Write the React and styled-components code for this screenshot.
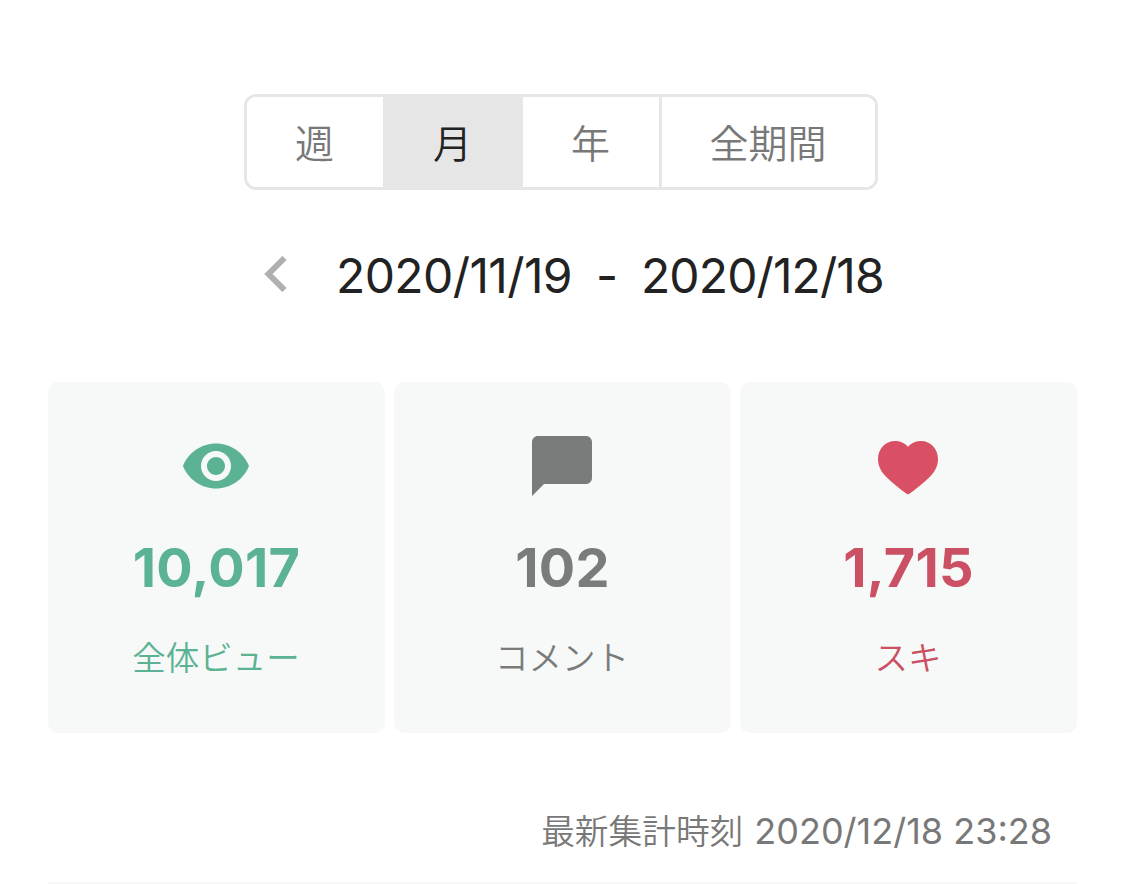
import { useState } from 'react';
import styled, { createGlobalStyle } from 'styled-components';

const GlobalStyle = createGlobalStyle`
    * {
        box-sizing: border-box;
    }
    body {
        margin: 0;
        background: #fff;
        font-family: Inter, 'Noto Sans CJK JP', sans-serif;
        overflow: hidden;
    }
`;

const Page = styled.main`
    display: flex;
    flex-direction: column;
    height: 884px;
    padding: 94px 48px 0;
    overflow: hidden;

    > * {
        flex-shrink: 0;
    }
`;

const Tabs = styled.div`
    display: flex;
    align-self: center;
    width: 634px;
    height: 96px;
    margin-right: 3px;
    border: 3px solid #e6e6e6;
    border-radius: 12px;
    overflow: hidden;
`;

const Tab = styled.button`
    width: ${props => props.$width}px;
    flex: none;
    padding: 0 1px 3px 0;
    border: 0;
    border-left: ${props => (props.$divider ? '3px solid #e6e6e6' : '0')};
    background: ${props => (props.$active ? '#e6e6e6' : '#fff')};
    color: ${props => (props.$active ? '#222' : '#787878')};
    font-family: inherit;
    font-size: 39px;
    font-weight: 350;
    cursor: pointer;
`;

const Period = styled.div`
    display: flex;
    align-items: center;
    height: 60px;
    margin: 55px 0 0 215px;
    color: #222;
    white-space: pre;
`;

const PrevButton = styled.button`
    display: flex;
    width: 25px;
    padding: 0;
    margin: 0 48px 2px 0;
    border: 0;
    background: none;
    cursor: pointer;
`;

const DateText = styled.span`
    width: ${props => props.$width}px;
    padding-top: 1px;
    font-size: 48px;
    line-height: 60px;
    letter-spacing: ${props => props.$spacing || 0}px;
    font-feature-settings: 'calt' 0;
`;

const Cards = styled.div`
    display: grid;
    grid-template-columns: repeat(3, 337px);
    gap: 9px;
    margin-top: 77px;
`;

const Card = styled.section`
    display: flex;
    flex-direction: column;
    align-items: center;
    height: 351px;
    padding: 48px 1px 0 0;
    border-radius: 10px;
    background: #f7f9f8;
    color: ${props => props.$color};

    svg {
        margin-right: 1px;
    }
`;

const Count = styled.strong`
    margin: 31px 0 0 1px;
    font-size: 54px;
    font-weight: 700;
    line-height: 70px;
    letter-spacing: 0.3px;
`;

const Label = styled.span`
    margin-top: 25px;
    font-size: 33.5px;
    font-weight: 350;
    line-height: 60px;
`;

const Updated = styled.p`
    display: flex;
    justify-content: flex-end;
    align-items: baseline;
    gap: 11px;
    margin: 70px 25px 0 0;
    color: #787878;
    font-size: 33.7px;
    font-weight: 350;
    line-height: 56px;
`;

const UpdatedTime = styled.time`
    font-size: 36px;
    font-weight: 400;
`;

const Day = styled.span`
    font-feature-settings: 'calt' 0;
`;

const Divider = styled.hr`
    width: 100%;
    height: 2px;
    margin: 22px 0 0;
    border: 0;
    background: #f7f7f7;
`;

const EyeIcon = () => (
    <svg width="72" height="72" viewBox="0 0 24 24" fill="currentColor">
        <path d="M12 4.5C7 4.5 2.73 7.61 1 12c1.73 4.39 6 7.5 11 7.5s9.27-3.11 11-7.5c-1.73-4.39-6-7.5-11-7.5zM12 17c-2.76 0-5-2.24-5-5s2.24-5 5-5 5 2.24 5 5-2.24 5-5 5zm0-8c-1.66 0-3 1.34-3 3s1.34 3 3 3 3-1.34 3-3-1.34-3-3-3z" />
    </svg>
);

const CommentIcon = () => (
    <svg width="72" height="72" viewBox="0 0 24 24" fill="currentColor">
        <path d="M20 2H4c-1.1 0-2 .9-2 2v18l4-4h14c1.1 0 2-.9 2-2V4c0-1.1-.9-2-2-2z" />
    </svg>
);

const HeartIcon = () => (
    <svg width="72" height="72" viewBox="0 0 24 24" fill="#d94f63">
        <path d="M12 5.55C10.9 4.3 9.4 3.65 7.7 3.65C4.4 3.65 2 6.3 2 9.7C2 12 3 13.9 4.7 15.6C6.6 17.5 9 19.4 11.4 21.2Q12 21.65 12.6 21.2C15 19.4 17.4 17.5 19.3 15.6C21 13.9 22 12 22 9.7C22 6.3 19.6 3.65 16.3 3.65C14.6 3.65 13.1 4.3 12 5.55z" />
    </svg>
);

const tabs = [
    { name: '週', width: 136 },
    { name: '月', width: 140 },
    { name: '年', width: 136 },
    { name: '全期間', width: 216, divider: true },
];

const stats = [
    { label: '全体ビュー', count: '10,017', color: '#5bb394', Icon: EyeIcon },
    { label: 'コメント', count: '102', color: '#7a7c7b', Icon: CommentIcon },
    { label: 'スキ', count: '1,715', color: '#cb5063', Icon: HeartIcon },
];

const App = () => {
    const [selected, setSelected] = useState('月');

    return (
        <Page>
            <GlobalStyle />
            <Tabs>
                {tabs.map(tab => (
                    <Tab
                        key={tab.name}
                        $width={tab.width}
                        $divider={tab.divider}
                        $active={tab.name === selected}
                        onClick={() => setSelected(tab.name)}
                    >
                        {tab.name}
                    </Tab>
                ))}
            </Tabs>
            <Period>
                <PrevButton aria-label="前の期間">
                    <svg width="25" height="36" viewBox="0 0 25 36" fill="none" stroke="#b0b0b0" strokeWidth="6">
                        <path d="M21.5 2L5.5 18L21.5 34" />
                    </svg>
                </PrevButton>
                <DateText $width={260} $spacing={-0.6}>2020/11/19</DateText>
                <DateText $width={45}>-</DateText>
                <DateText $width={242} $spacing={-0.9}>2020/12/18</DateText>
            </Period>
            <Cards>
                {stats.map(({ label, count, color, Icon }) => (
                    <Card key={label} $color={color}>
                        <Icon />
                        <Count>{count}</Count>
                        <Label>{label}</Label>
                    </Card>
                ))}
            </Cards>
            <Updated>
                最新集計時刻
                <UpdatedTime>
                    <Day>2020/12/18</Day> 23:28
                </UpdatedTime>
            </Updated>
            <Divider />
        </Page>
    );
};

export default App;
